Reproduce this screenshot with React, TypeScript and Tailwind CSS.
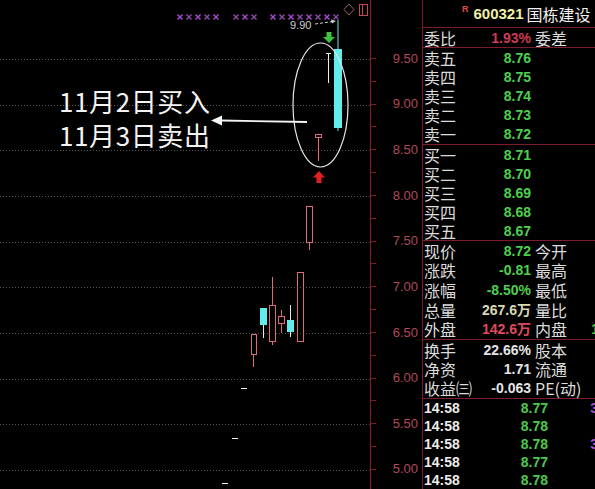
import React from "react";

const LINE = "#7c1c2c";
const RED = "#e06a78";
const CYAN = "#62ecec";

const yOf = (p: number) => 58 + (9.5 - p) * 91.3;

function Chart() {
  const labels = [9.5, 9.0, 8.5, 8.0, 7.5, 7.0, 6.5, 6.0, 5.5, 5.0];
  const ticks: number[] = [];
  for (let k = 0; k < 19; k++) ticks.push(yOf(9.5) + k * 22.825);
  const g1 = [180, 189, 198, 207, 216];
  const g2 = [236, 245, 254];
  const g3 = [273, 282, 291, 300, 309, 318, 327, 336];
  const marks = [...g1, ...g2, ...g3];
  return (
    <svg width={422} height={489} className="absolute left-0 top-0" xmlns="http://www.w3.org/2000/svg">
      {labels.map((p) => (
        <line key={"g" + p} x1={0} x2={370} y1={Math.round(yOf(p)) + 1.5} y2={Math.round(yOf(p)) + 1.5} stroke="#555" strokeDasharray="1 2" strokeWidth={1} />
      ))}
      <line x1={370.5} x2={370.5} y1={0} y2={489} stroke={LINE} strokeWidth={1.2} />
      {ticks.map((t, i) => (
        <line key={"t" + i} x1={371} x2={376} y1={Math.round(t) + 0.5} y2={Math.round(t) + 0.5} stroke={LINE} />
      ))}
      {labels.map((p) => (
        <text key={"l" + p} x={418} y={yOf(p) + 4.6} textAnchor="end" fontFamily="'Liberation Sans', sans-serif" fontSize={13} fill="#b0485a">
          {p.toFixed(2)}
        </text>
      ))}
      <path d="M349 4 L354 9.5 L349 15 L344 9.5 Z" fill="none" stroke="#a06070" strokeWidth={1} />
      <rect x={359.5} y={4.5} width={8} height={11} fill="none" stroke="#c04858" strokeWidth={1} />
      <line x1={362.5} x2={362.5} y1={5} y2={15} stroke="#c04858" strokeWidth={1} />
      {marks.map((x, i) => (
        <g key={"m" + i} stroke={i % 2 === 0 ? "#a848d0" : "#8a4aa8"} strokeWidth={1.4}>
          <line x1={x - 2.5} y1={14.5} x2={x + 2.5} y2={19.5} />
          <line x1={x - 2.5} y1={19.5} x2={x + 2.5} y2={14.5} />
        </g>
      ))}
      <text x={290} y={29} fontFamily="'Liberation Sans', sans-serif" fontSize={11} fill="#cfcfcf">9.90</text>
      <line x1={315} y1={24} x2={333} y2={21.5} stroke="#cfcfcf" strokeWidth={1} strokeDasharray="3 2" />
      <path d="M336 21 L331 19.5 L332 23.5 Z" fill="#cfcfcf" />
      <rect x={326.5} y={32} width={5} height={5} fill="#3fc23f" />
      <path d="M323 37 L335 37 L329 43 Z" fill="#3fc23f" />
      <line x1={338} x2={338} y1={20} y2={49} stroke={CYAN} strokeWidth={1} />
      <rect x={334} y={49} width={8} height={79} fill={CYAN} />
      <line x1={338} x2={338} y1={128} y2={131} stroke={CYAN} strokeWidth={1} />
      <line x1={326} x2={331} y1={53.5} y2={53.5} stroke="#f0f0f0" strokeWidth={1} />
      <line x1={328.5} x2={328.5} y1={53} y2={83} stroke="#f0f0f0" strokeWidth={1} />
      <rect x={315.5} y={134.5} width={6} height={3} fill="none" stroke={RED} strokeWidth={1} />
      <line x1={318.5} x2={318.5} y1={138} y2={161} stroke={RED} strokeWidth={1} />
      <ellipse cx={320.5} cy={105} rx={27.5} ry={62} fill="none" stroke="#e6e6e6" strokeWidth={1.2} />
      <path d="M307 121 L222 119.6 L222 115.5 L211 120.5 L222 125.5 L222 121.4 L307 123 Z" fill="#f4f4f4" />
      <path d="M313 177.5 L325 177.5 L319 171 Z" fill="#e02020" />
      <rect x={316.5} y={177} width={5} height={6} fill="#e02020" />
      <rect x={306.5} y={206.5} width={6} height={36} fill="none" stroke={RED} />
      <line x1={309.5} x2={309.5} y1={243} y2={250} stroke={RED} />
      <rect x={297.5} y={272.5} width={6} height={69} fill="none" stroke={RED} />
      <line x1={290.5} x2={290.5} y1={305} y2={337} stroke="#dfeeee" />
      <rect x={287} y={320} width={7} height={12} fill={CYAN} />
      <line x1={281.5} x2={281.5} y1={310} y2={333} stroke={RED} />
      <rect x={278.5} y={316.5} width={6} height={7} fill="#000" stroke={RED} />
      <line x1={272.5} x2={272.5} y1={277} y2={345} stroke={RED} />
      <rect x={269.5} y={305.5} width={6} height={36} fill="#000" stroke={RED} />
      <line x1={263.5} x2={263.5} y1={322} y2={338} stroke="#dfeeee" />
      <rect x={260} y={308} width={7} height={17} fill={CYAN} />
      <line x1={253.5} x2={253.5} y1={354} y2={367} stroke={RED} />
      <rect x={251.5} y={334.5} width={5} height={20} fill="#000" stroke={RED} />
      <line x1={241} x2={247} y1={388.5} y2={388.5} stroke="#f0f0f0" />
      <line x1={232} x2={238} y1={438.5} y2={438.5} stroke="#f0f0f0" />
      <line x1={222} x2={228} y1={483.5} y2={483.5} stroke="#f0f0f0" />
    </svg>
  );
}

const CJK = { fontFamily: "'Noto Sans CJK SC', sans-serif" } as const;

function Row({ label, value, color, label2, extra, extraColor }: { label: string; value: string; color: string; label2?: string; extra?: string; extraColor?: string }) {
  return (
    <div className="flex-1 flex items-center min-h-0">
      <div className="w-[108px] flex items-center justify-between pl-[1px]">
        <span className="text-[16px] leading-none text-[#dcdcdc] font-['Noto_Sans_CJK_SC',sans-serif]">{label}</span>
        <span className={`text-[14px] leading-none font-bold font-['Liberation_Sans','Noto_Sans_CJK_SC',sans-serif] ${color}`}>{value}</span>
      </div>
      {label2 && (
        <span className="pl-[4px] text-[16px] leading-none text-[#dcdcdc] font-['Noto_Sans_CJK_SC',sans-serif] whitespace-nowrap">{label2}</span>
      )}
      {extra && (
        <span className={`ml-auto mr-[-4px] text-[14px] leading-none font-bold font-['Liberation_Sans',sans-serif] ${extraColor}`}>{extra}</span>
      )}
    </div>
  );
}

export default function App() {
  const green = "text-[#4fcf4f]";
  return (
    <div className="w-[595px] h-[489px] bg-black flex overflow-hidden">
      <div className="relative w-[422px] h-[489px] shrink-0">
        <Chart />
        <div className="absolute left-[59px] top-[84px] text-[26px] tracking-[0.6px] leading-[34px] text-[#f4f4f4] whitespace-nowrap" style={CJK}>
          <div>11月2日买入</div>
          <div>11月3日卖出</div>
        </div>
      </div>
      <div className="w-[173px] h-[489px] border-l border-[#7c1c2c] flex flex-col overflow-hidden">
        <div className="h-[28px] shrink-0 border-b border-[#7c1c2c] flex items-center pl-[39px] whitespace-nowrap">
          <span className="self-start mt-[3px] text-[9px] font-bold text-[#e04848] font-['Liberation_Sans',sans-serif]">R</span>
          <span className="ml-[5px] text-[15px] font-bold text-[#f0f0a8] leading-none font-['Liberation_Sans',sans-serif]">600321</span>
          <span className="ml-[3px] text-[16px] text-[#f2f2f2] leading-none font-['Noto_Sans_CJK_SC',sans-serif]">国栋建设</span>
        </div>
        <div className="h-[20px] shrink-0 border-b border-[#7c1c2c] flex flex-col">
          <Row label="委比" value="1.93%" color="text-[#d03a56]" label2="委差" />
        </div>
        <div className="h-[97px] shrink-0 border-b border-[#7c1c2c] flex flex-col">
          <Row label="卖五" value="8.76" color={green} />
          <Row label="卖四" value="8.75" color={green} />
          <Row label="卖三" value="8.74" color={green} />
          <Row label="卖二" value="8.73" color={green} />
          <Row label="卖一" value="8.72" color={green} />
        </div>
        <div className="h-[96px] shrink-0 border-b border-[#7c1c2c] flex flex-col">
          <Row label="买一" value="8.71" color={green} />
          <Row label="买二" value="8.70" color={green} />
          <Row label="买三" value="8.69" color={green} />
          <Row label="买四" value="8.68" color={green} />
          <Row label="买五" value="8.67" color={green} />
        </div>
        <div className="h-[99px] shrink-0 border-b border-[#7c1c2c] flex flex-col">
          <Row label="现价" value="8.72" color={green} label2="今开" />
          <Row label="涨跌" value="-0.81" color={green} label2="最高" />
          <Row label="涨幅" value="-8.50%" color={green} label2="最低" />
          <Row label="总量" value="267.6万" color="text-[#d8d8b4]" label2="量比" />
          <Row label="外盘" value="142.6万" color="text-[#e04a5c]" label2="内盘" extra="1" extraColor="text-[#4fcf4f]" />
        </div>
        <div className="h-[59px] shrink-0 border-b border-[#7c1c2c] flex flex-col">
          <Row label="换手" value="22.66%" color="text-[#e4e4e4]" label2="股本" />
          <Row label="净资" value="1.71" color="text-[#e4e4e4]" label2="流通" />
          <Row label="收益㈢" value="-0.063" color="text-[#e4e4e4]" label2="PE(动)" />
        </div>
        <div className="flex flex-col">
          {[
            ["8.77", "3"],
            ["8.78", ""],
            ["8.78", "3"],
            ["8.77", ""],
            ["8.78", ""],
          ].map(([v, e], i) => (
            <div key={i} className="h-[18px] flex items-center">
              <div className="w-[125px] flex items-center justify-between pl-[1px] text-[14px] leading-none font-bold font-['Liberation_Sans',sans-serif]">
                <span className="text-[#ececec]">14:58</span>
                <span className="text-[#4cc84c]">{v}</span>
              </div>
              {e && <span className="ml-auto mr-[-3px] text-[14px] leading-none font-bold text-[#a050c8] font-['Liberation_Sans',sans-serif]">{e}</span>}
            </div>
          ))}
        </div>
      </div>
    </div>
  );
}
